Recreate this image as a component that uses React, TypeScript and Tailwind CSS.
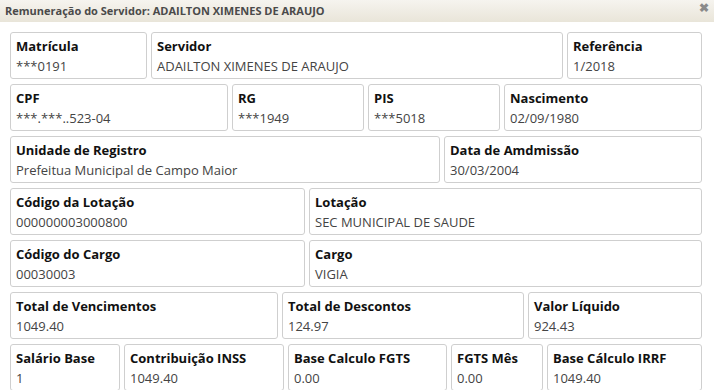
import React from "react";

type Field = { label: string; value: string; w?: string };

const rows: Field[][] = [
  [
    { label: "Matrícula", value: "***0191", w: "w-[137px]" },
    { label: "Servidor", value: "ADAILTON XIMENES DE ARAUJO", w: "w-[412px]" },
    { label: "Referência", value: "1/2018" },
  ],
  [
    { label: "CPF", value: "***.***..523-04", w: "w-[218px]" },
    { label: "RG", value: "***1949", w: "w-[132px]" },
    { label: "PIS", value: "***5018", w: "w-[132px]" },
    { label: "Nascimento", value: "02/09/1980" },
  ],
  [
    { label: "Unidade de Registro", value: "Prefeitua Municipal de Campo Maior", w: "w-[430px]" },
    { label: "Data de Amdmissão", value: "30/03/2004" },
  ],
  [
    { label: "Código da Lotação", value: "000000003000800", w: "w-[295px]" },
    { label: "Lotação", value: "SEC MUNICIPAL DE SAUDE" },
  ],
  [
    { label: "Código do Cargo", value: "00030003", w: "w-[295px]" },
    { label: "Cargo", value: "VIGIA" },
  ],
  [
    { label: "Total de Vencimentos", value: "1049.40", w: "w-[268px]" },
    { label: "Total de Descontos", value: "124.97", w: "w-[242px]" },
    { label: "Valor Líquido", value: "924.43" },
  ],
  [
    { label: "Salário Base", value: "1", w: "w-[110px]" },
    { label: "Contribuição INSS", value: "1049.40", w: "w-[160px]" },
    { label: "Base Calculo FGTS", value: "0.00", w: "w-[159px]" },
    { label: "FGTS Mês", value: "0.00", w: "w-[92px]" },
    { label: "Base Cálculo IRRF", value: "1049.40" },
  ],
];

const Box = ({ label, value, w }: Field) => (
  <div
    className={`${w ?? "flex-1"} h-[47px] shrink-0 rounded-[3px] border border-[#cfcfcf] bg-white px-[5px] pt-[4px]`}
  >
    <div className="text-[13px] leading-[19px] font-bold text-[#111]">{label}</div>
    <div className="text-[13px] leading-[20px] text-[#444]">{value}</div>
  </div>
);

export default function App() {
  return (
    <div
      className="w-[714px] h-[390px] overflow-hidden bg-white"
      style={{ fontFamily: '"Open Sans", "Noto Sans", sans-serif' }}
    >
      <div className="h-[22px] flex items-center justify-between pl-[5px] pr-[5px] bg-gradient-to-b from-[#f6f4ef] to-[#e9e5d9]">
        <span className="text-[11px] font-bold text-[#4a4a4a]">
          Remuneração do Servidor: ADAILTON XIMENES DE ARAUJO
        </span>
        <span className="text-[12px] font-bold text-[#8a8a8a] leading-none -mt-[6px]">✖</span>
      </div>
      <div className="flex flex-col gap-[5px] pl-[10px] pr-[12px] pt-[10px]">
        {rows.map((row, i) => (
          <div key={i} className="flex gap-[4px]">
            {row.map((f) => (
              <Box key={f.label} {...f} />
            ))}
          </div>
        ))}
      </div>
    </div>
  );
}
